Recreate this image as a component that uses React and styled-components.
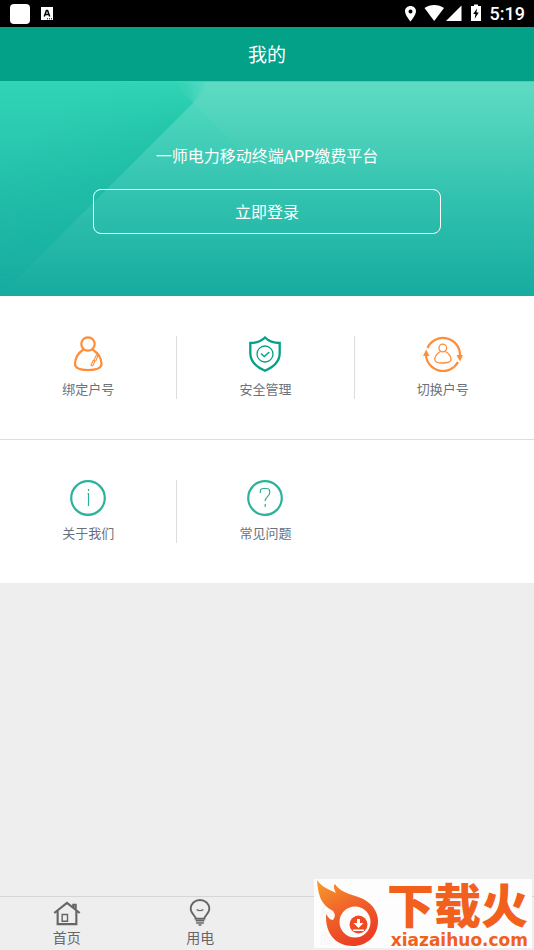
import styled, { createGlobalStyle } from "styled-components";

const colors = {
  brand: "#03a187",
  mint: "#2bb39a",
  orange: "#ff8d38",
  label: "#6b717b",
  tab: "#666666",
  line: "#dddddd",
  fire: "#f2601d",
};

export default function App() {
  return (
    <>
      <GlobalStyle />
      <Page>
        <StatusBar>
          <StatusGroup>
            <AppSquare />
            <LetterIcon />
          </StatusGroup>
          <StatusGroup>
            <SystemIcons />
            <Clock>5:19</Clock>
          </StatusGroup>
        </StatusBar>
        <Header>
          <Title>我的</Title>
        </Header>
        <Hero>
          <HeroBackground />
          <Slogan>一师电力移动终端APP缴费平台</Slogan>
          <LoginButton type="button">立即登录</LoginButton>
        </Hero>
        <main>
          <MenuRow $line>
            <MenuItem icon={<BindIcon />} label="绑定户号" divider />
            <MenuItem icon={<ShieldIcon />} label="安全管理" divider />
            <MenuItem icon={<SwitchIcon />} label="切换户号" />
          </MenuRow>
          <MenuRow>
            <MenuItem icon={<AboutIcon />} label="关于我们" divider />
            <MenuItem icon={<QuestionIcon />} label="常见问题" />
          </MenuRow>
        </main>
        <TabBar>
          <TabLink href="#home">
            <HomeIcon />
            首页
          </TabLink>
          <TabLink href="#power">
            <BulbIcon />
            用电
          </TabLink>
          <TabLink href="#service">
            <ServiceIcon />
            服务
          </TabLink>
          <TabLink href="#mine" aria-label="我的" $active>
            <MineIcon />
          </TabLink>
        </TabBar>
        <Watermark>
          <FlameLogo />
          <Brand>
            <BrandName>下载火</BrandName>
            <BrandSite>xiazaihuo.com</BrandSite>
          </Brand>
        </Watermark>
      </Page>
    </>
  );
}

function MenuItem({ icon, label, divider }) {
  return (
    <Cell>
      <CellButton type="button" $divider={divider}>
        {icon}
        <span>{label}</span>
      </CellButton>
    </Cell>
  );
}

function LetterIcon() {
  return (
    <svg width="12" height="13" viewBox="0 0 12 13" aria-hidden="true">
      <path d="M0 0h12v13H0z" fill="#fff" />
      <path d="M3.300 9.500 5.400 3.500h1.200L8.700 9.500M4.300 7.600h3.400" fill="none" stroke="#000" strokeWidth="1.500" />
      <path d="M6 11.800h1M8 11.800h1M10 11.800h1" stroke="#000" />
    </svg>
  );
}

function SystemIcons() {
  return (
    <svg width="77" height="20" viewBox="0 0 77 20" fill="#fff" aria-hidden="true">
      <path
        fillRule="evenodd"
        d="M5.500 2C2.500 2 0 4.200 0 7.200 0 11 5.500 17.500 5.500 17.500S11 11 11 7.200C11 4.200 8.500 2 5.500 2Zm0 3.400a2 2 0 1 1 0 4 2 2 0 0 1 0-4Z"
      />
      <path d="M19.500 4C25 0 33.500 0 39 4L29.200 17Z" />
      <path d="M56.500 1.500v15.500H41Z" />
      <path fillRule="evenodd" d="M69 .500h4V2h3v15H66V2h3Zm3 4L68.200 10h2.200l-.700 4.700 4.100-6.200h-2.300Z" />
    </svg>
  );
}

function HeroBackground() {
  return (
    <Backdrop viewBox="0 0 534 214" preserveAspectRatio="none" aria-hidden="true">
      <defs>
        <linearGradient id="base" x1="0" y1="0" x2="0" y2="1">
          <stop offset="0" stopColor="#31d4b6" />
          <stop offset="0.500" stopColor="#23bfaa" />
          <stop offset="1" stopColor="#16aca0" />
        </linearGradient>
        <linearGradient id="sheet" x1="0" y1="0" x2="0" y2="1">
          <stop offset="0" stopColor="#fff" stopOpacity="0.170" />
          <stop offset="0.550" stopColor="#fff" stopOpacity="0.070" />
          <stop offset="1" stopColor="#fff" stopOpacity="0" />
        </linearGradient>
        <linearGradient id="wedge" gradientUnits="userSpaceOnUse" x1="0" y1="0" x2="0" y2="120">
          <stop offset="0" stopColor="#e8e0c8" stopOpacity="0.070" />
          <stop offset="1" stopColor="#e8e0c8" stopOpacity="0" />
        </linearGradient>
        <linearGradient id="shade" gradientUnits="userSpaceOnUse" x1="150" y1="66" x2="90" y2="6">
          <stop offset="0" stopColor="#05ac8c" stopOpacity="0.140" />
          <stop offset="1" stopColor="#05ac8c" stopOpacity="0" />
        </linearGradient>
        <linearGradient id="fadeIn" gradientUnits="userSpaceOnUse" x1="178" y1="0" x2="206" y2="0">
          <stop offset="0" stopColor="#fff" stopOpacity="0" />
          <stop offset="1" stopColor="#fff" />
        </linearGradient>
        <linearGradient id="fadeOut" gradientUnits="userSpaceOnUse" x1="0" y1="0" x2="0" y2="200">
          <stop offset="0" stopColor="#fff" stopOpacity="0" />
          <stop offset="0.200" stopColor="#fff" />
          <stop offset="0.400" stopColor="#fff" />
          <stop offset="1" stopColor="#fff" stopOpacity="0" />
        </linearGradient>
        <mask id="sheetEdge">
          <path d="M170 0h36v8L193 21 170 -2z" fill="url(#fadeIn)" />
          <path d="M206 0h328v214H0L193 21 206 8z" fill="#fff" />
        </mask>
        <mask id="shadeEdge">
          <path d="M0 0h193v214H0z" fill="url(#fadeOut)" />
        </mask>
      </defs>
      <path d="M0 0h534v214H0z" fill="url(#base)" />
      <path d="M0 0h193V21L0 214z" fill="url(#shade)" mask="url(#shadeEdge)" />
      <path d="M0 0h534v214H0z" fill="url(#sheet)" mask="url(#sheetEdge)" />
      <path d="M206 0h328v150H322L193 21z" fill="url(#wedge)" />
    </Backdrop>
  );
}

function BindIcon() {
  return (
    <MenuSvg viewBox="0 0 36 36" $color={colors.orange}>
      <circle cx="18" cy="8" r="6.700" strokeWidth="2.200" />
      <path d="M13.500 13.500C8 17 5 22.500 5 28c0 4.500 5 6 13 6s13.500-1.500 13.500-6c0-5.500-3.500-11-9-14.500" strokeWidth="2.200" />
      <path d="m24 24 2-4.200q1.300-1 1.700.600L26 24.500q-1 1.200-2-.500ZM21 29l2-4.200q1.300-1 1.700.600l-1.700 4q-1.300 1.200-2-.400Z" strokeWidth="1.100" />
    </MenuSvg>
  );
}

function ShieldIcon() {
  return (
    <MenuSvg viewBox="0 0 36 36" $color={colors.brand}>
      <path d="M18 1.500C14.500 5 9 7 3.300 7V17c0 8 6 14 14.700 17.700C26.700 31 32.700 25 32.700 17V7C27 7 21.500 5 18 1.500Z" strokeWidth="2.300" />
      <circle cx="18" cy="18" r="8" strokeWidth="1.300" />
      <path d="m14 17.500 3.300 3 5-4.500" strokeWidth="1.400" />
    </MenuSvg>
  );
}

function SwitchIcon() {
  return (
    <MenuSvg viewBox="0 0 40 36" $color={colors.orange} $wide>
      <path d="M4.500 12A17 17 0 0 1 37 19M35 26A17 17 0 0 1 3 19" strokeWidth="2.200" />
      <path d="M0 20 3.200 13.500 6.500 20ZM33.500 19h6.500L37 25.500Z" fill={colors.orange} stroke="none" />
      <circle cx="19.800" cy="12" r="3.800" strokeWidth="1.300" />
      <path d="M17.500 15.500c-3.500 2-5.700 5-5.700 8 0 2.500 3 3.500 8 3.500s8.200-1 8.200-3.500c0-3-2.200-6-5.700-8" strokeWidth="1.300" />
    </MenuSvg>
  );
}

function AboutIcon() {
  return (
    <MenuSvg viewBox="0 0 36 36" $color={colors.mint}>
      <circle cx="18" cy="18" r="16.800" strokeWidth="2.200" />
      <path d="M18.500 9v2M17.500 13.500h1V26" strokeWidth="1.200" />
    </MenuSvg>
  );
}

function QuestionIcon() {
  return (
    <MenuSvg viewBox="0 0 36 36" $color={colors.mint}>
      <circle cx="18" cy="18" r="16.800" strokeWidth="2.200" />
      <path d="M13.300 13V11q0-2.500 3-2.500h3.400q3 0 3 3v1.500c0 3-4.500 4-4.500 8M18.200 24v3" strokeWidth="1.200" />
    </MenuSvg>
  );
}

function HomeIcon() {
  return (
    <TabSvg viewBox="0 0 28 28">
      <path d="M.800 14.500 14 4 27.200 14.500M4.300 12v14h19.400V12M20.500 8.500V6H23V10.500" strokeWidth="2.200" />
      <path d="M9 16h5.500v7H9z" strokeWidth="1.500" />
    </TabSvg>
  );
}

function BulbIcon() {
  return (
    <TabSvg viewBox="0 0 28 28">
      <path d="M9.500 20.500c0-3.500-5.200-5-5.200-10.300a9.700 9.200 0 0 1 19.400 0c0 5.300-5.200 6.800-5.200 10.300Z" strokeWidth="2" />
      <path d="M9.500 22.500h9M10 24.800h8M12.500 27h3" strokeWidth="1.600" />
      <path d="M10.500 11q3.500 2 7 0" strokeWidth="1.300" />
    </TabSvg>
  );
}

function ServiceIcon() {
  return (
    <TabSvg viewBox="0 0 28 28">
      <path d="M2 15a12 12 0 0 1 24 0q-3-2.500-6 0-3-2.500-6 0-3-2.500-6 0-3-2.500-6 0ZM14 15v9q0 3-4 2" strokeWidth="2" />
    </TabSvg>
  );
}

function MineIcon() {
  return (
    <TabSvg viewBox="0 0 28 28">
      <circle cx="14" cy="9" r="6" strokeWidth="2" />
      <path d="M3 26q0-10 11-10t11 10Z" strokeWidth="2" />
    </TabSvg>
  );
}

function FlameLogo() {
  return (
    <svg width="64" height="69" viewBox="0 0 64 69" aria-hidden="true">
      <defs>
        <linearGradient id="flame" x1="0" y1="0" x2="0.500" y2="1">
          <stop offset="0" stopColor="#f99b2c" />
          <stop offset="0.500" stopColor="#f1662a" />
          <stop offset="1" stopColor="#ec3f23" />
        </linearGradient>
      </defs>
      <path
        d="M3 1C8 8 14 10 22 14C20 10 19 7 21 5C26 13 36 15 47 19C57 23 64 32 64 42C64 57 53 67 39 67C22 67 11 55 12 35C14 38 16 41 19 41C21 38 22 36 19 32C7 26 4 16 3 1Z"
        fill="url(#flame)"
      />
      <circle cx="41" cy="43" r="15.500" fill="#fdfdfd" />
      <circle cx="44.500" cy="45.500" r="9" fill="#ee4b25" />
      <path d="M43 40h3v4h3.500l-5 5-5-5h3.500zM39 50.500h11v1.500H39z" fill="#fff" />
    </svg>
  );
}

const GlobalStyle = createGlobalStyle`
  * {
    box-sizing: border-box;
  }

  body {
    margin: 0;
    background: #eeeeee;
    font-family: Roboto, "Noto Sans CJK SC", sans-serif;
  }

  button {
    font-family: inherit;
    cursor: pointer;
  }
`;

const Page = styled.div`
  position: relative;
  display: flex;
  flex-direction: column;
  min-height: 100vh;
`;

const StatusBar = styled.div`
  display: flex;
  align-items: center;
  justify-content: space-between;
  height: 27px;
  padding: 0 9px 0 10px;
  background: #000;
  color: #fff;
`;

const StatusGroup = styled.div`
  display: flex;
  align-items: center;
  gap: 8px;

  &:first-child {
    gap: 11px;
  }
`;

const AppSquare = styled.span`
  width: 20px;
  height: 20px;
  border-radius: 4px;
  background: #fff;
`;

const Clock = styled.time`
  font-size: 18px;
  font-weight: 500;
  line-height: 27px;
`;

const Header = styled.header`
  display: flex;
  align-items: center;
  justify-content: center;
  height: 55px;
  padding-top: 4px;
  border-bottom: 1px solid #70b9ac;
  background: ${colors.brand};
  color: #fff;
`;

const Title = styled.h1`
  margin: 0;
  font-size: 19px;
  font-weight: 400;
  line-height: 28px;
`;

const Hero = styled.section`
  position: relative;
  display: flex;
  flex-direction: column;
  align-items: center;
  gap: 20px;
  padding: 63px 18px 62px;
  color: #fff;
`;

const Backdrop = styled.svg`
  position: absolute;
  inset: 0;
  width: 100%;
  height: 100%;
`;

const Slogan = styled.p`
  position: relative;
  margin: 0;
  font-size: 16px;
  line-height: 24px;
`;

const LoginButton = styled.button`
  position: relative;
  width: 70%;
  height: 45px;
  padding: 0 0 2px;
  border: 1px solid #fff;
  border-radius: 8px;
  background: transparent;
  color: #fff;
  font-size: 16px;
`;

const MenuRow = styled.ul`
  display: grid;
  grid-template-columns: repeat(3, 1fr);
  margin: 0;
  padding: 40px 2px 40px 0;
  list-style: none;
  background: #fff;
  border-bottom: ${({ $line }) => ($line ? `1px solid ${colors.line}` : "none")};
`;

const Cell = styled.li`
  display: flex;
`;

const CellButton = styled.button`
  display: flex;
  flex: 1;
  flex-direction: column;
  align-items: center;
  gap: 9px;
  padding: 0;
  border: 0;
  border-right: 1px solid ${({ $divider }) => ($divider ? colors.line : "transparent")};
  background: none;
  color: ${colors.label};
  font-size: 13px;
  line-height: 18px;
`;

const MenuSvg = styled.svg.attrs({ "aria-hidden": true })`
  width: ${({ $wide }) => ($wide ? "40px" : "36px")};
  height: 36px;
  fill: none;
  stroke: ${({ $color }) => $color};
`;

const TabBar = styled.nav`
  display: flex;
  height: 54px;
  margin-top: auto;
  border-top: 1px solid #d6d6d6;
`;

const TabLink = styled.a`
  display: flex;
  flex: 1;
  flex-direction: column;
  align-items: center;
  padding-top: 2px;
  color: ${({ $active }) => ($active ? colors.brand : colors.tab)};
  font-size: 14px;
  line-height: 24px;
  text-decoration: none;
`;

const TabSvg = styled.svg.attrs({ "aria-hidden": true })`
  width: 28px;
  height: 28px;
  fill: none;
  stroke: currentColor;
`;

const Watermark = styled.aside`
  position: absolute;
  right: 2px;
  bottom: 2px;
  display: flex;
  width: 218px;
  height: 69px;
  background: rgba(253, 253, 253, 0.95);
  color: ${colors.fire};
`;

const Brand = styled.div`
  display: flex;
  flex: 1;
  flex-direction: column;
  align-items: flex-end;
  justify-content: space-between;
  padding: 2px 4px 0 0;
`;

const BrandName = styled.strong`
  font-family: "Noto Sans CJK SC", sans-serif;
  font-size: 47px;
  font-weight: 900;
  line-height: 44px;
`;

const BrandSite = styled.span`
  font-family: "DejaVu Sans", sans-serif;
  font-size: 17px;
  font-weight: 700;
  line-height: 16px;
`;
